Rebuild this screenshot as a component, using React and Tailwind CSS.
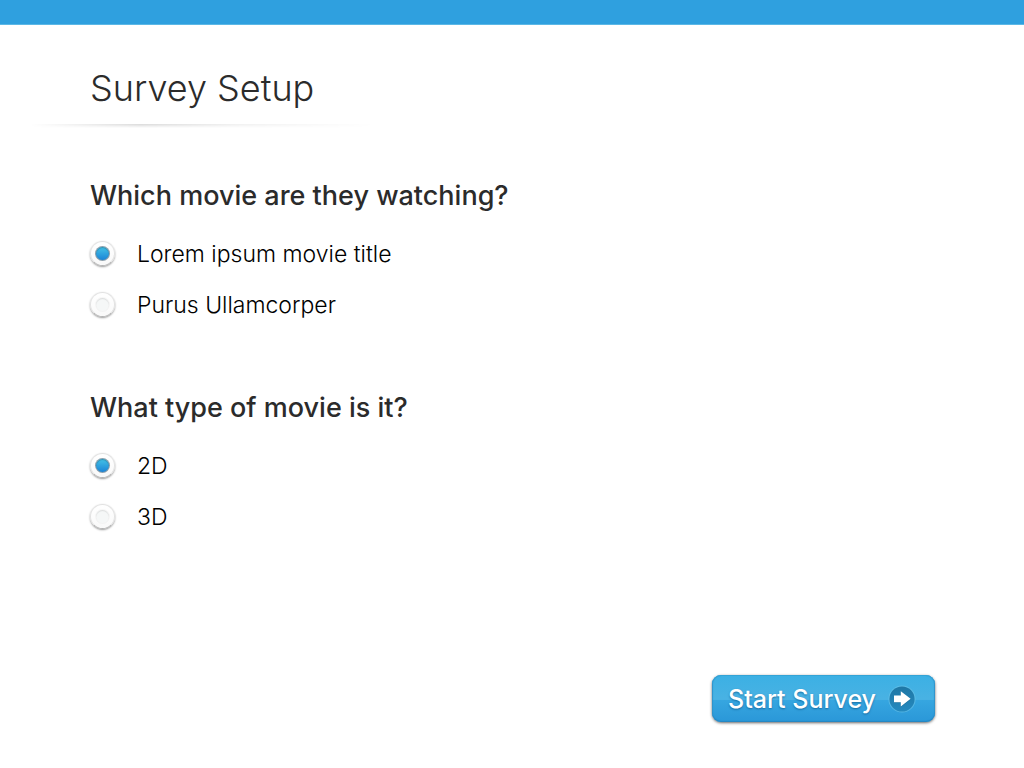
import { useState } from "react";

const QUESTIONS = [
  {
    id: "movie",
    title: "Which movie are they watching?",
    options: ["Lorem ipsum movie title", "Purus Ullamcorper"],
  },
  {
    id: "type",
    title: "What type of movie is it?",
    options: ["2D", "3D"],
  },
];

function RadioOption({ name, label, checked, onChange }) {
  return (
    <label className="flex h-[51px] cursor-pointer items-center gap-[22px]">
      <input
        type="radio"
        name={name}
        checked={checked}
        onChange={onChange}
        className="grid size-[25px] shrink-0 cursor-pointer appearance-none place-items-center rounded-full border border-[#e2e2e2] border-b-[#b4b4b4] bg-linear-to-b from-[#ffffff] to-[#f9f9f9] shadow-[0_1px_2px_rgba(0,0,0,0.4)] before:size-[13px] before:rounded-full before:bg-[#f5f7f7] before:shadow-[inset_0_1px_1px_rgba(0,0,0,0.1),0_0_0_1px_rgba(0,0,0,0.03)] before:content-[''] checked:before:bg-linear-to-b checked:before:from-[#45c3e6] checked:before:to-[#1d84d6] checked:before:shadow-[inset_0_1px_1px_rgba(0,60,90,0.35),0_0_0_1px_rgba(80,110,130,0.65)]"
      />
      <span className="text-[23px] leading-[30px] font-light text-black">{label}</span>
    </label>
  );
}

function Question({ id, title, options }) {
  const [selected, setSelected] = useState(options[0]);
  return (
    <fieldset>
      <legend className="text-[27px] leading-[32px] font-medium text-[#2b2b2b]">{title}</legend>
      <div className="mt-4">
        {options.map((option) => (
          <RadioOption
            key={option}
            name={id}
            label={option}
            checked={selected === option}
            onChange={() => setSelected(option)}
          />
        ))}
      </div>
    </fieldset>
  );
}

function ArrowBadge() {
  return (
    <svg viewBox="0 0 28 28" className="size-7 shrink-0" aria-hidden="true">
      <defs>
        <linearGradient id="badge" x1="0" y1="0" x2="0" y2="1">
          <stop offset="0" stopColor="#1f77a5" />
          <stop offset="1" stopColor="#2489bf" />
        </linearGradient>
      </defs>
      <circle cx="14" cy="14" r="13.6" fill="#6cc4ea" fillOpacity="0.6" />
      <circle cx="14" cy="14" r="12.6" fill="url(#badge)" />
      <path d="M6.2 11.4h6.6V7.5l9.6 7.2-9.6 7.2V18H6.2z" fill="#14628c" fillOpacity="0.6" />
      <path d="M6 10.4h6.8V6.2l9.8 7.6-9.8 7.6v-4.2H6z" fill="#fff" />
    </svg>
  );
}

export default function App() {
  return (
    <div className="flex min-h-screen flex-col bg-white font-['Inter','Liberation_Sans',sans-serif]">
      <div className="h-[25px] border-b border-[#5cb8e6] bg-[#2fa0df]" />
      <header className="pt-10">
        <h1 className="px-[90px] text-[36px] leading-[46px] font-light text-[#2b2b2b]">Survey Setup</h1>
        <div className="mt-[13px] ml-[30px] h-1 w-[345px] bg-linear-to-b from-black/15 to-transparent [mask-image:linear-gradient(to_right,transparent,black_32%,rgba(0,0,0,0.4)_60%,transparent)]" />
      </header>
      <main className="flex flex-col gap-[62px] px-[90px] pt-[52px]">
        {QUESTIONS.map((question) => (
          <Question key={question.id} {...question} />
        ))}
      </main>
      <footer className="mt-auto flex justify-end px-[89px] pt-8 pb-[46px]">
        <button
          type="button"
          className="flex h-[47px] cursor-pointer items-center gap-3 rounded-[9px] bg-[linear-gradient(to_bottom,#3bb0e4_0%,#49b2e3_52%,#36a6e0_54%,#2a97d8_100%)] pr-[19px] pl-4 text-[25px] leading-[30px] font-medium text-white shadow-[inset_0_1px_0_#33a3d6,inset_0_-1px_1px_#2585c2,inset_1px_0_1px_#3195cc,inset_-1px_0_1px_#3195cc,0_1px_3px_rgba(0,0,0,0.6)] text-shadow-[0_1px_2px_rgba(0,70,120,0.6)]"
        >
          Start Survey
          <ArrowBadge />
        </button>
      </footer>
    </div>
  );
}
